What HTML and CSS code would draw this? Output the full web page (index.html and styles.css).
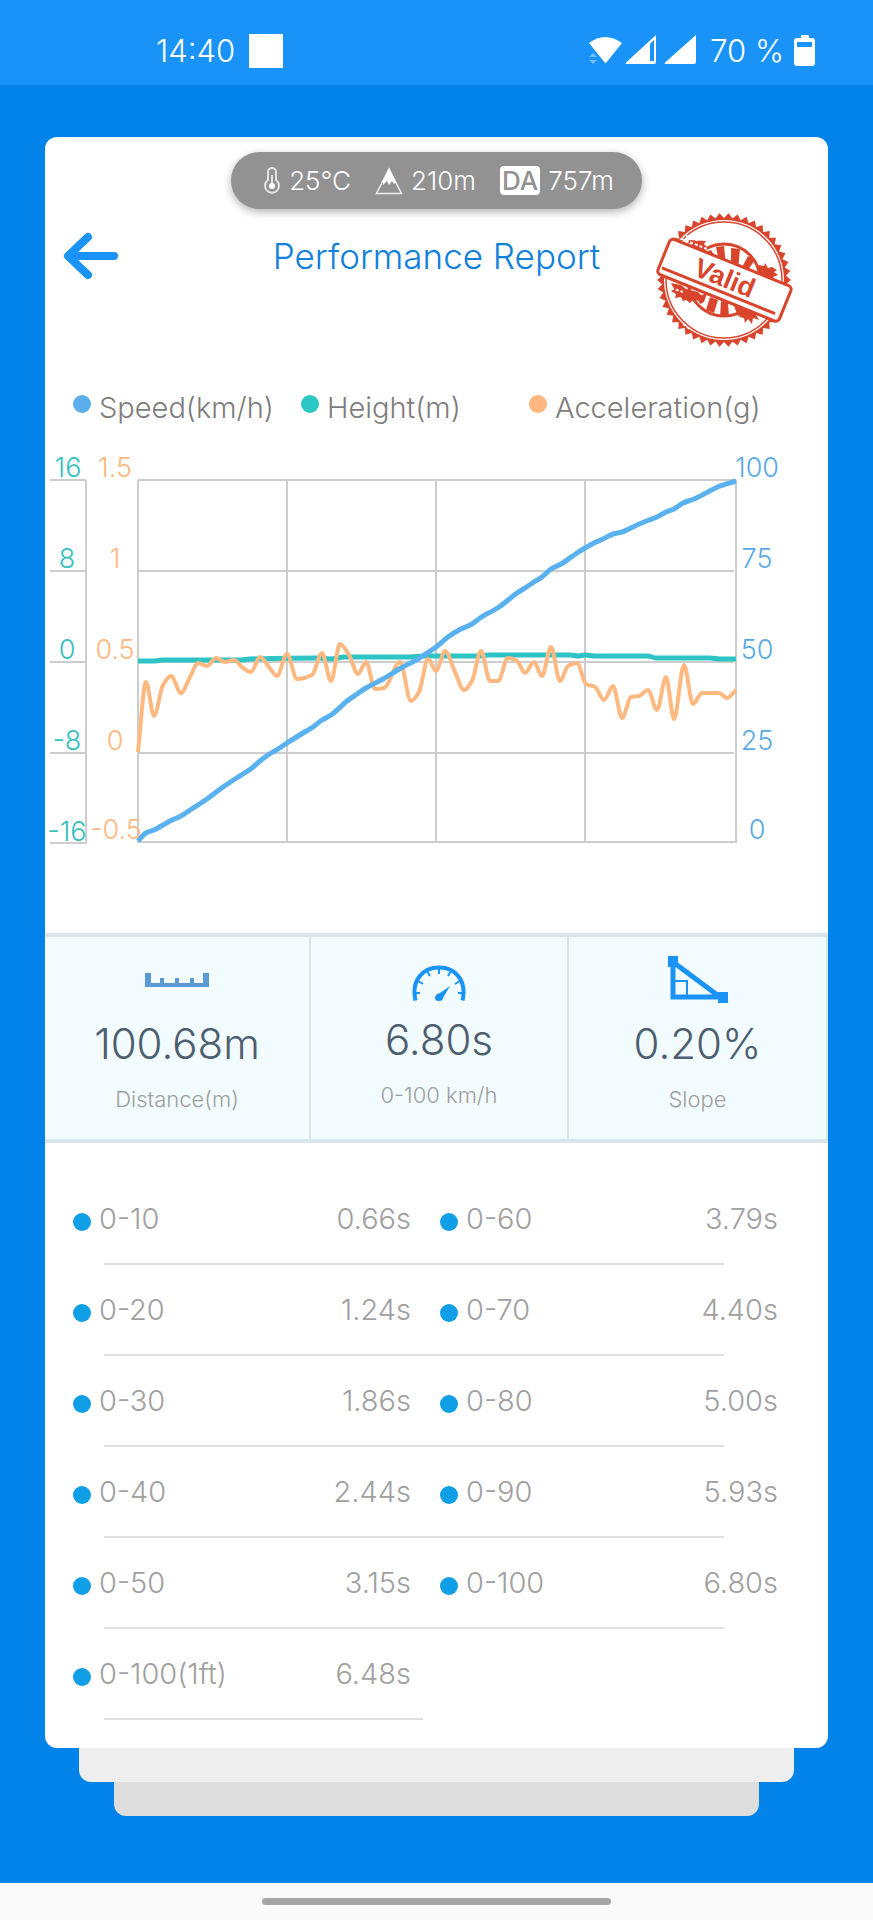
FILE: index.html
```html
<!DOCTYPE html>
<html lang="en">
<head>
<meta charset="utf-8">
<meta name="viewport" content="width=device-width, initial-scale=1">
<title>Performance Report</title>
<link rel="stylesheet" href="styles.css">
</head>
<body>
<div class="screen">
  <header class="status-bar">
    <div class="status-left">
      <span>14:40</span>
      <span class="notification"></span>
    </div>
    <div class="status-right">
      <svg width="115" height="34" viewBox="0 0 115 34" aria-hidden="true">
        <path fill="#fff" d="M4 9Q20 -3 37 9L20.500 29.500Z"/>
        <path fill="#6fbcff" d="M4 23l4-4 4 4zM4 26h8l-4 4z"/>
        <path fill="#fff" fill-rule="evenodd" d="M71 1V28q0 2-2 2H42q-2 0-1-1.500ZM65 10V27H69V6Z"/>
        <path fill="#fff" d="M111 1V28q0 2-2 2H81q-2 0-1-1.500Z"/>
      </svg>
      <span>70 %</span>
      <svg width="21" height="32" viewBox="0 0 21 32" aria-hidden="true">
        <path fill="#fff" fill-rule="evenodd" d="M7 0h8v3h3q3 0 3 3v22q0 3-3 3H3q-3 0-3-3V6q0-3 3-3h4zM3 7v5h15V7z"/>
      </svg>
    </div>
  </header>

  <main class="page">
    <article class="card">
      <div class="conditions">
        <span class="condition">
          <svg width="18" height="28" viewBox="0 0 18 28" aria-hidden="true">
            <g fill="none" stroke="#e4e4e4" stroke-width="2"><path d="M5 13V5a4 4 0 0 1 8 0v8a7 7 0 1 1-8 0Z"/><path d="M9 8v12"/></g>
            <circle cx="9" cy="19" r="3" fill="#fff"/>
          </svg>
          <span>25℃</span>
        </span>
        <span class="condition">
          <svg width="28" height="28" viewBox="0 0 28 28" aria-hidden="true">
            <path d="M14 2 1.500 26.500h25Z" fill="none" stroke="#eee" stroke-width="1.500"/>
            <path d="M14 1 8 14v4l4-4 2 4 3-4 2 3 2-2Z" fill="#fff"/>
          </svg>
          <span>210m</span>
        </span>
        <span class="condition">
          <abbr class="da" title="Density altitude">DA</abbr>
          <span>757m</span>
        </span>
      </div>

      <div class="title-bar">
        <button class="back" type="button" aria-label="Back">
          <svg width="56" height="48" viewBox="0 0 56 48" aria-hidden="true">
            <path d="M25 5 5 24 25 43M6 24H51" fill="none" stroke="#1993f7" stroke-width="8" stroke-linecap="round" stroke-linejoin="round"/>
          </svg>
        </button>
        <h1 class="title">Performance Report</h1>
        <svg class="stamp" width="140" height="140" viewBox="0 0 140 140" role="img" aria-label="Valid">
          <g fill="none" stroke="#d8452c">
            <path id="teeth" fill="#d8452c" stroke="none" fill-rule="evenodd"/>
            <circle cx="70" cy="70" r="58" stroke-width="1.500"/>
            <circle cx="70" cy="70" r="36" stroke-width="3"/>
          </g>
          <g fill="#d8452c">
            <path d="M62 37 70 36 72 56 65 52ZM77 38 86 39 84 60 77 57ZM94 46 101 50 91 64 86 61ZM50 43 57 40 66 55 60 54Z"/>
            <path d="M43 87 53 83 50 92 46 94ZM56 87 64 90 60 103 52 100ZM67 91 74 93 75 106 66 107ZM80 96 86 98 92 103 84 106Z"/>
            <path d="M35 30l17 1-2 3 5 5-6 1-5-2-2 3-6-4 2-3-4-1zM105 55l5 1 1-3 3 5 4-1 5 3-3 2 4 3-5 2 2 3-8-1-8-4 1-4-4-3z"/>
            <path d="M17 73l10 2 5 4 12 3 5 5-4 1 1 3-7-1-3 3-4-3-3 1-2-4-6 1 1-4-5-3 3-2zM84 99l7-3 4 4 8 3 8-1-4 4-5-1 3 5-6-2-1 6-4-5-3 4-1-5-5-1 2-3z"/>
          </g>
          <path d="M13 23 53 39M32 26l14 5M17 78l12 4M91 28l9 7M29 114l8 6" stroke="#fff" stroke-width="2" stroke-dasharray="3 2"/>
          <g transform="rotate(22 70 70)">
            <rect x="5" y="51" width="131" height="38" rx="4" fill="#fff" stroke="#d8452c" stroke-width="3"/>
            <path d="M8 82H130" stroke="#d8452c" stroke-width="3"/>
            <text class="stamp-text" x="70" y="77" text-anchor="middle">Valid</text>
          </g>
        </svg>
      </div>

      <ul class="legend">
        <li class="legend-item speed">Speed(km/h)</li>
        <li class="legend-item height">Height(m)</li>
        <li class="legend-item accel">Acceleration(g)</li>
      </ul>

      <svg class="chart" viewBox="45 440 783 420" role="img" aria-label="Speed, height and acceleration over time">
        <path class="grid" d="M138 480H736M138 571H734M138 662H734M138 753H734M137 842H736M138 480V843M287 480V842M436 480V842M585 480V842M736 480V843"/>
        <path class="grid" d="M50 480H86M50 571H86M50 662H86M50 753H86M50 843H86M86 480V844"/>
        <g class="axis axis-height">
          <text x="68" y="477">16</text><text x="67" y="568">8</text><text x="67" y="659">0</text><text x="67" y="750">-8</text><text x="67" y="841">-16</text>
        </g>
        <g class="axis axis-accel">
          <text x="115" y="477">1.5</text><text x="115" y="568">1</text><text x="115" y="659">0.5</text><text x="115" y="750">0</text><text x="116" y="839">-0.5</text>
        </g>
        <g class="axis axis-speed">
          <text x="757" y="477">100</text><text x="757" y="568">75</text><text x="757" y="659">50</text><text x="757" y="750">25</text><text x="757" y="839">0</text>
        </g>
        <path id="line-height" class="line line-height"/>
        <path id="line-accel" class="line line-accel"/>
        <path id="line-speed" class="line line-speed"/>
      </svg>

      <section class="stats">
        <div class="stat">
          <svg width="64" height="52" viewBox="0 0 64 52" aria-hidden="true"><path fill="#5b9bd5" d="M0 20h6v10h9v-5h4v5h11v-5h4v5h11v-5h4v5h9V20h6v14H0z"/></svg>
          <strong class="stat-value">100.68m</strong>
          <span class="stat-label">Distance(m)</span>
        </div>
        <div class="stat stat-raised">
          <svg width="54" height="52" viewBox="0 0 54 52" aria-hidden="true">
            <path d="M3.500 51.500C-1 32 10 18.500 27 18.500S55 32 50.500 51.500" fill="none" stroke="#1993f7" stroke-width="4"/>
            <path d="M27 19v6M15 22l3 5M39 22l-3 5M6 32l5 3M48 32l-5 3M2 44h6M52 44h-6" stroke="#1993f7" stroke-width="2"/>
            <path fill="#1993f7" d="M38 37 31 49q0 3-4 3t-4-3q0-4 5-5Z"/>
          </svg>
          <strong class="stat-value">6.80s</strong>
          <span class="stat-label">0-100 km/h</span>
        </div>
        <div class="stat">
          <svg width="60" height="52" viewBox="0 0 60 52" aria-hidden="true">
            <g fill="none" stroke="#1993f7"><path d="M5 9V44H52Z" stroke-width="5"/><path d="M6 28h13v14" stroke-width="2"/></g>
            <path fill="#1993f7" d="M0 3h10v11H0zM50 39h10v11H50z"/>
          </svg>
          <strong class="stat-value">0.20%</strong>
          <span class="stat-label">Slope</span>
        </div>
      </section>

      <table class="splits">
        <tbody>
          <tr><th scope="row">0-10</th><td>0.66s</td><th scope="row">0-60</th><td>3.79s</td></tr>
          <tr><th scope="row">0-20</th><td>1.24s</td><th scope="row">0-70</th><td>4.40s</td></tr>
          <tr><th scope="row">0-30</th><td>1.86s</td><th scope="row">0-80</th><td>5.00s</td></tr>
          <tr><th scope="row">0-40</th><td>2.44s</td><th scope="row">0-90</th><td>5.93s</td></tr>
          <tr><th scope="row">0-50</th><td>3.15s</td><th scope="row">0-100</th><td>6.80s</td></tr>
          <tr class="short"><th scope="row">0-100(1ft)</th><td>6.48s</td></tr>
        </tbody>
      </table>
    </article>
    <div class="sheet sheet-near"></div>
    <div class="sheet sheet-far"></div>
  </main>

  <footer class="nav-bar"><span class="nav-handle"></span></footer>
</div>
<script src="chart.js"></script>
</body>
</html>
```
FILE: styles.css
```css
* {
  box-sizing: border-box;
}

body {
  margin: 0;
  background: #0283ea;
  font-family: Inter, "Liberation Sans", sans-serif;
  font-weight: 300;
}

.screen {
  display: flex;
  flex-direction: column;
  min-height: 100vh;
}

.status-bar {
  display: flex;
  justify-content: space-between;
  align-items: center;
  padding: 16px 58px 0 156px;
  height: 85px;
  background: #1993f7;
  color: #fff;
  font-size: 31px;
}

.status-left,
.status-right {
  display: flex;
  align-items: center;
  gap: 14px;
}

.status-right {
  gap: 10px;
}

.notification {
  width: 34px;
  height: 34px;
  background: #fff;
}

.page {
  flex: 1;
  padding: 52px 45px 66px;
}

.card {
  padding: 15px 0 27px;
  border-radius: 12px;
  background: #fff;
}

.sheet {
  height: 34px;
  border-radius: 0 0 12px 12px;
}

.sheet-near {
  margin: 0 34px;
  background: #eee;
}

.sheet-far {
  margin: 0 69px;
  background: #ddd;
}

.conditions {
  display: flex;
  justify-content: center;
  align-items: center;
  gap: 24px;
  width: max-content;
  height: 57px;
  margin: 0 auto;
  padding: 0 28px 0 32px;
  border-radius: 29px;
  background: #929292;
  box-shadow: 0 3px 8px rgba(0, 0, 0, 0.3);
  color: #fff;
  font-size: 26px;
}

.condition {
  display: flex;
  align-items: center;
  gap: 8px;
}

.da {
  padding: 0 2px;
  border-radius: 4px;
  background: #fff;
  color: #929292;
  font-size: 26px;
  font-weight: 500;
  line-height: 29px;
  text-decoration: none;
}

.title-bar {
  display: grid;
  grid-template-columns: 1fr auto 1fr;
  align-items: start;
  padding: 1px 34px 0 18px;
}

.back {
  justify-self: start;
  margin: 22px 0 0;
  padding: 0;
  border: 0;
  background: none;
}

.back svg,
.stat svg,
.stamp,
.chart {
  display: block;
}

.title {
  margin: 26px 0 0 16px;
  color: #1080dc;
  font-size: 35px;
  font-weight: 300;
  line-height: 40px;
}

.stamp {
  justify-self: end;
}

.stamp-text {
  fill: #d8452c;
  font: bold 27px "Liberation Sans", sans-serif;
}

.legend {
  display: grid;
  grid-template-columns: 228fr 228fr 255fr;
  margin: 0;
  padding: 38px 44px 12px 28px;
  color: #7d7d7d;
  font-size: 29px;
  line-height: 40px;
  list-style: none;
}

.legend-item {
  display: flex;
  gap: 8px;
  min-width: 0;
  white-space: nowrap;
}

.legend-item::before {
  flex: none;
  width: 18px;
  height: 18px;
  margin-top: 7px;
  border-radius: 50%;
  content: "";
}

.speed::before {
  background: #5aaeec;
}

.height::before {
  background: #2cc6c6;
}

.accel::before {
  background: #ffb77f;
}

.chart {
  width: 100%;
}

.grid {
  fill: none;
  stroke: #cdcdcd;
  stroke-width: 2;
}

.axis {
  font-size: 27px;
  text-anchor: middle;
}

.axis-height {
  fill: #35bfbf;
}

.axis-accel {
  fill: #ffb781;
}

.axis-speed {
  fill: #5aaae6;
}

.line {
  fill: none;
  stroke-linejoin: round;
}

.line-height {
  stroke: #2ec4c6;
  stroke-width: 5;
}

.line-accel {
  stroke: #ffb980;
  stroke-width: 4;
}

.line-speed {
  stroke: #5ab1ef;
  stroke-width: 5;
}

.stats {
  display: grid;
  grid-template-columns: 266fr 258fr 259fr;
  margin-top: 73px;
  border-top: 4px solid #dae5e9;
  border-bottom: 4px solid #dae5e9;
  background: #f2fbfd;
}

.stat {
  display: flex;
  flex-direction: column;
  align-items: center;
  height: 202px;
  padding-top: 16px;
  border-right: 2px solid #dae5e9;
}

.stat-raised {
  padding-top: 12px;
}

.stat-value {
  margin-top: 14px;
  color: #4d5e70;
  font-size: 42px;
  font-weight: 300;
  line-height: 50px;
}

.stat-label {
  margin-top: 16px;
  color: #9f9f9f;
  font-size: 22px;
  line-height: 28px;
}

.splits {
  display: block;
  padding: 32px 0 0;
  color: #a0a0a0;
  font-size: 29px;
  line-height: 40px;
}

.splits tbody {
  display: block;
}

.splits tr {
  display: grid;
  grid-template-columns: 169fr 169fr 183fr 184fr;
  column-gap: 0;
  height: 91px;
  padding: 24px 50px 0 28px;
}

.splits tr::after {
  grid-column: 1 / -1;
  height: 2px;
  margin: 0 54px 0 31px;
  background: #e0e0e0;
  content: "";
}

.splits .short::after {
  grid-column: 1 / 3;
  margin-right: -12px;
}

.splits th,
.splits td {
  height: 63px;
  padding: 0;
}

.splits th {
  display: flex;
  gap: 8px;
  font-weight: 300;
  text-align: left;
  white-space: nowrap;
}

.splits th::before {
  width: 18px;
  height: 18px;
  margin-top: 14px;
  border-radius: 50%;
  background: #109fe6;
  content: "";
}

.splits td {
  text-align: right;
}

.splits td + th {
  padding-left: 29px;
}

.nav-bar {
  display: flex;
  justify-content: center;
  align-items: center;
  height: 37px;
  background: #fafafa;
}

.nav-handle {
  width: 40%;
  height: 7px;
  border-radius: 4px;
  background: #a6a6a6;
}
```
FILE: chart.js
```js
const series = {
  speed: [
    [138,841],[146,833],[154,830],[163,825],[172,820],[181,816],[190,810],[207,799],[223,787],[235,779],[252,768],
    [260,761],[268,755],[278,749],[287,743],[303,733],[313,727],[322,720],[331,715],[347,701],[357,694],[366,688],
    [383,679],[401,668],[418,659],[427,653],[436,647],[448,637],[459,630],[472,624],[480,618],[499,607],[517,593],
    [525,588],[534,582],[542,577],[551,569],[561,564],[577,553],[585,548],[596,542],[603,539],[613,534],[622,532],
    [637,525],[649,520],[657,517],[666,512],[674,509],[683,503],[694,499],[720,486],[736,481]
  ],
  height: [
    [138,661],[154,661],[162,660],[241,660],[250,659],[320,658],[330,659],[345,657],[410,657],[425,656],[480,656],
    [488,655],[570,655],[578,656],[585,655],[595,656],[648,656],[656,658],[710,658],[720,659],[736,659]
  ],
  accel: [
    [138,752],[146,682],[154,716],[163,685],[171,676],[181,693],[190,677],[198,663],[207,666],[216,658],[225,662],
    [234,660],[243,668],[251,672],[260,657],[269,667],[277,676],[287,654],[297,679],[312,675],[322,653],[331,681],
    [340,644],[349,655],[358,674],[366,662],[375,689],[384,688],[400,662],[411,701],[419,692],[428,659],[436,671],
    [445,651],[455,672],[464,690],[472,681],[481,651],[490,681],[498,681],[508,658],[517,661],[525,673],[534,662],
    [542,676],[551,647],[560,681],[568,666],[577,663],[586,684],[595,687],[604,700],[613,686],[622,718],[631,697],
    [639,696],[648,690],[657,710],[666,677],[674,719],[684,665],[693,704],[702,693],[719,693],[727,698],[736,690]
  ]
};

// Cubic path whose tangents are flat at each local extreme.
function smoothPath(points) {
  const slope = (a, b) => (b[1] - a[1]) / (b[0] - a[0]);
  const tangents = points.map((p, i) => {
    if (i === 0) return slope(p, points[1]);
    if (i === points.length - 1) return slope(points[i - 1], p);
    const before = slope(points[i - 1], p);
    const after = slope(p, points[i + 1]);
    return before * after <= 0 ? 0 : 2 * before * after / (before + after);
  });
  return points.reduce((path, p, i) => {
    if (i === 0) return `M${p}`;
    const q = points[i - 1];
    const third = (p[0] - q[0]) / 3;
    return `${path}C${q[0] + third},${q[1] + tangents[i - 1] * third} ${p[0] - third},${p[1] - tangents[i] * third} ${p}`;
  }, "");
}

for (const [name, points] of Object.entries(series)) {
  document.getElementById(`line-${name}`).setAttribute("d", smoothPath(points));
}

// Serrated rim of the stamp: a toothed outline around a circular hole.
const teeth = 46;
let rim = "";
for (let i = 0; i < teeth * 2; i++) {
  const radius = i % 2 ? 62 : 67;
  const angle = Math.PI * i / teeth;
  rim += `${i ? "L" : "M"}${70 + radius * Math.cos(angle)} ${70 + radius * Math.sin(angle)}`;
}
document.getElementById("teeth").setAttribute("d", `${rim}ZM10 70a60 60 0 1 0 120 0a60 60 0 1 0-120 0Z`);
```
